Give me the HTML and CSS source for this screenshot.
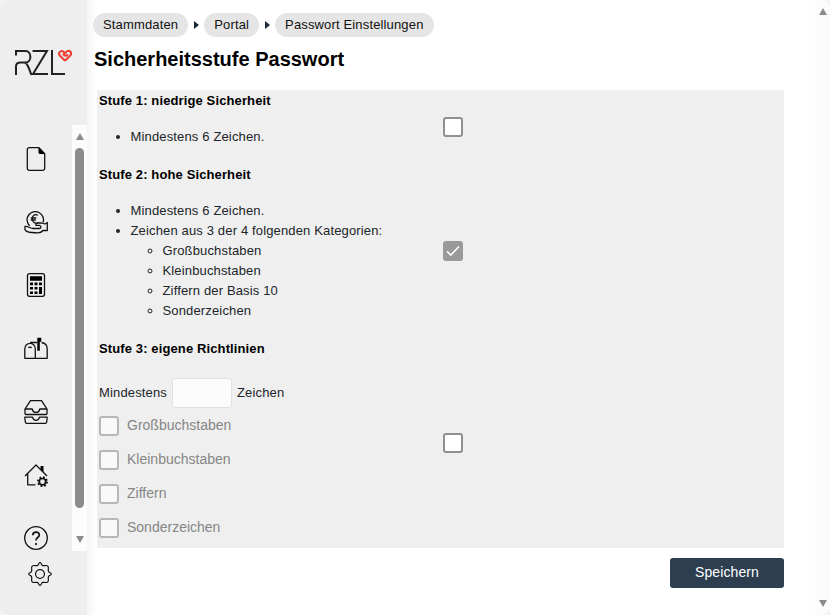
FILE: index.html
```html
<!DOCTYPE html>
<html lang="de">
<head>
<meta charset="utf-8">
<title>Sicherheitsstufe Passwort</title>
<link rel="stylesheet" href="styles.css">
</head>
<body>
<div class="app">
  <aside class="sidebar">
    <svg class="logo" viewBox="0 0 58 28" width="58" height="28" fill="none">
      <path d="M2 6.500V2H11.500C18 2 18 13.500 11.500 13.500H6.500C3.500 13.500 2 15 2 17.500V26M11 13.500C14 15 15 20 17.500 26M18.500 2H33L19 25H34M38 1V25H51" stroke="#222" stroke-width="2"/>
      <path d="M51 11.700L46 6.800C43.500 4 46.500 1 49 2.300C51 3.300 50.500 5.800 48.600 5.800M51 11.700L56 6.800C58.800 3.800 55.500.5 53 2.300L50 5C50.500 7.800 53.500 7 53.500 5" stroke="#ed3c32" stroke-width="2"/>
    </svg>
    <div class="rail">
      <nav class="icons">
        <svg viewBox="0 0 24 24"><path d="M5.300.7H15l5.700 6V21.500a1.800 1.800 0 0 1-1.800 1.800H5.100a1.800 1.800 0 0 1-1.800-1.800V2.500A1.800 1.800 0 0 1 5.300.7"/><path class="solid" d="M14.500.7V5.500a1.500 1.500 0 0 0 1.500 1.500H21z"/></svg>
        <svg viewBox="0 0 24 24"><path d="M5.600 15.700A8.200 8.200 0 1 1 19 12.500M14 5.300C10.500 3.300 8.300 6 8.300 9s2.500 5.300 5.800 3.500M6.800 8h5.500M6.800 10h5M1 16.500c3.500-.5 5 2 8 2h6.500c2-.2 2-3-.2-3.200H12c-.5-1.800.5-2.300 2-2.300h3.500l3.500 1 2.300-1.500v8H19c-1.500 2-3 2.500-6 2.300-5-.2-9.500 0-11.500-2.300-.7-1.500-1-1.800-.5-3z"/></svg>
        <svg viewBox="0 0 24 24"><rect x="3.500" y=".7" width="17" height="22.600" rx="2"/><path class="solid" d="M6 3.200h12v4.600H6zM6 9.600h3v2.600H6zm4.500 0h3v2.600h-3zm4.500 0h3v2.600h-3zM6 14h3v2.600H6zm4.500 0h3v2.600h-3zm4.500 0h3v7h-3zM6 18.400h3V21H6zm4.500 0h3V21h-3z"/></svg>
        <svg viewBox="0 0 24 24"><path d="M.8 21.300V12c0-7.500 10.500-7.500 10.500 0v9.300zM6 5.500h7M.8 21.300h22.400V12c0-3.500-2.200-6-5.700-6.500M4.500 11c.5-1.200 2.500-1.200 3 0"/><path class="solid" d="M13.300.8h4v4h-1.500v9h-2.500z"/></svg>
        <svg viewBox="0 0 24 24"><path d="M1 9l5.500-8.300h11L23 9v4.500a1 1 0 0 1-1 1H2a1 1 0 0 1-1-1zM1 9h7.200c1 4.500 6.600 4.500 7.600 0H23M.8 17.200h7.700c1 4.200 6 4.200 7 0h7.700L22.700 22a1.400 1.400 0 0 1-1.400 1.300H2.700A1.400 1.400 0 0 1 1.300 22z"/></svg>
        <svg viewBox="0 0 24 24"><path d="M1 13L12 2l11 11M3.700 10.500v11.300H11.500"/><path class="solid" d="M16.500 3h3V9.500l-3-3z"/><circle cx="18.500" cy="18.700" r="3.200" stroke-width="1.700"/><circle cx="18.500" cy="18.700" r="4.500" stroke-width="1.900" stroke-dasharray="1.700 1.834"/></svg>
        <svg viewBox="0 0 24 24"><circle cx="12" cy="12" r="11.300"/><path stroke-width="1.700" d="M8.800 9.300c0-4.200 6.800-4 6.500-.2-.2 2.600-3.300 2.300-3.300 5.300M12 17v2"/></svg>
      </nav>
      <div class="scrollbar"><i class="up"></i><i class="thumb"></i><i class="down"></i></div>
    </div>
    <svg class="gear" viewBox="0 0 24 24"><path d="M9.600 3.500C10.500 2.800 10.700.7 12 .7s1.500 2.100 2.400 2.800c1.700.8 3.800-1 5.400.7 1.500 1.500-.2 3.600.7 5.400.7.900 2.800 1.100 2.800 2.400s-2.100 1.500-2.800 2.400c-.9 1.800.8 3.900-.7 5.400-1.600 1.700-3.700-.1-5.400.7-.9.700-1.100 2.800-2.400 2.800s-1.500-2.100-2.400-2.800c-1.700-.8-3.800 1-5.400-.7-1.500-1.500.2-3.600-.7-5.400C2.800 13.500.7 13.300.7 12s2.100-1.500 2.800-2.400c.9-1.800-.8-3.900.7-5.400 1.600-1.700 3.700.1 5.400-.7z"/><circle cx="12" cy="12" r="4.400"/></svg>
  </aside>
  <main class="main">
    <div class="crumbs"><span>Stammdaten</span><i></i><span>Portal</span><i></i><span>Passwort Einstellungen</span></div>
    <h1>Sicherheitsstufe Passwort</h1>
    <div class="levels">
      <section class="level">
        <div class="text"><h2>Stufe 1: niedrige Sicherheit</h2><ul><li>Mindestens 6 Zeichen.</li></ul></div>
        <span class="box"></span>
      </section>
      <section class="level">
        <div class="text"><h2>Stufe 2: hohe Sicherheit</h2>
          <ul><li>Mindestens 6 Zeichen.</li><li>Zeichen aus 3 der 4 folgenden Kategorien:
            <ul><li>Großbuchstaben</li><li>Kleinbuchstaben</li><li>Ziffern der Basis 10</li><li>Sonderzeichen</li></ul></li></ul>
        </div>
        <span class="box checked"><svg viewBox="0 0 20 20" width="20" height="20"><path d="M4 10.300l3.800 3.800L16 5.500" fill="none" stroke="#fff" stroke-width="1.600"/></svg></span>
      </section>
      <section class="level custom">
        <div class="text"><h2>Stufe 3: eigene Richtlinien</h2>
          <div class="minimum"><span>Mindestens</span><input type="text"><span>Zeichen</span></div>
          <div class="option"><span class="box"></span><span>Großbuchstaben</span></div>
          <div class="option"><span class="box"></span><span>Kleinbuchstaben</span></div>
          <div class="option"><span class="box"></span><span>Ziffern</span></div>
          <div class="option"><span class="box"></span><span>Sonderzeichen</span></div>
        </div>
        <span class="box"></span>
      </section>
    </div>
    <button class="save">Speichern</button>
  </main>
  <div class="scrollbar page"><i class="up"></i><i class="down"></i></div>
</div>
</body>
</html>
```
FILE: styles.css
```css
* { box-sizing: border-box; }
html { background: #f4f4f4; }
body { margin: 0; font: 13px/20px "Liberation Sans", Arial, sans-serif; letter-spacing: .15px; color: #212529; }
.app { display: flex; width: 830px; height: 615px; border-radius: 9px; overflow: hidden; background: #fff; }
.sidebar { width: 87px; flex: none; background: #eee; display: flex; flex-direction: column; }
.logo { margin: 49px 0 0 14px; flex: none; }
.rail { display: flex; justify-content: space-between; margin-top: 48px; height: 426px; }
.icons { display: flex; flex-direction: column; gap: 39.200px; padding: 22px 0 0 24px; }
.icons svg, .gear { width: 24px; height: 24px; flex: none; fill: none; stroke: #111; stroke-width: 1.300; stroke-linejoin: round; }
.icons .solid { fill: #000; stroke: none; }
.gear { margin: 11px 0 0 28px; stroke-width: 1.200; }
.scrollbar { width: 15px; background: #fcfcfc; display: flex; flex-direction: column; align-items: center; justify-content: space-between; padding: 8px 0; }
.up, .down { border: 4.500px solid transparent; border-top: 0; border-bottom: 7px solid #8b8b8b; }
.down { border-bottom: 0; border-top: 7px solid #8b8b8b; }
.thumb { width: 9px; height: 360px; border-radius: 5px; background: #8b8b8b; margin-bottom: 20px; }
.main { flex: 1; padding: 13px 31px 0 6px; background: linear-gradient(90deg, #f5f5f5, #fff 9px); display: flex; flex-direction: column; }
.crumbs { display: flex; align-items: center; }
.crumbs span { height: 24px; line-height: 23px; padding: 0 10px; border-radius: 12px; background: #e5e5e5; color: #111; }
.crumbs i { margin: 0 5px 0 6px; border: 4px solid transparent; border-left: 5px solid #17283b; border-right: 0; }
h1 { margin: 10px 0 0 1px; font-size: 20px; line-height: 24px; letter-spacing: 0; color: #000; }
.levels { margin: 19px 0 0 4px; background: #efefef; }
.level { display: flex; align-items: center; height: 74px; padding-left: 2px; }
.level:nth-child(2) { height: 174px; }
.custom { height: 210px; }
.text { width: 344px; align-self: flex-start; padding-top: 1px; }
h2 { margin: 0 0 16px; font-size: 13px; line-height: 20px; letter-spacing: .12px; color: #000; }
ul { margin: 0; padding-left: 31.500px; }
ul ul { padding-left: 32px; }
.box { flex: none; width: 20px; height: 20px; border: 2px solid #909090; border-radius: 3px; background: #fff; }
.checked { border: 0; background: #999; }
.checked svg { display: block; }
.minimum { display: flex; align-items: center; margin-top: 19px; height: 30px; }
.minimum input { width: 60px; height: 30px; margin: 0 5px; border: 1px solid #dee2e6; border-radius: 3px; background: #fcfcfc; }
.option { display: flex; align-items: center; gap: 8px; height: 20px; margin-top: 14px; font-size: 14px; letter-spacing: 0; color: #868686; }
.minimum + .option { margin-top: 8px; }
.option .box { border-color: #b7b7b7; background: #f9f9f9; }
.option span:last-child { margin-top: -2px; }
.save { width: 114px; height: 30px; margin: 10px 0 0; align-self: flex-end; border: 0; border-radius: 3px; background: #2c3e50; color: #fff; font: 14px/28px "Liberation Sans", Arial, sans-serif; padding: 0 0 2px; letter-spacing: .1px; }
```
